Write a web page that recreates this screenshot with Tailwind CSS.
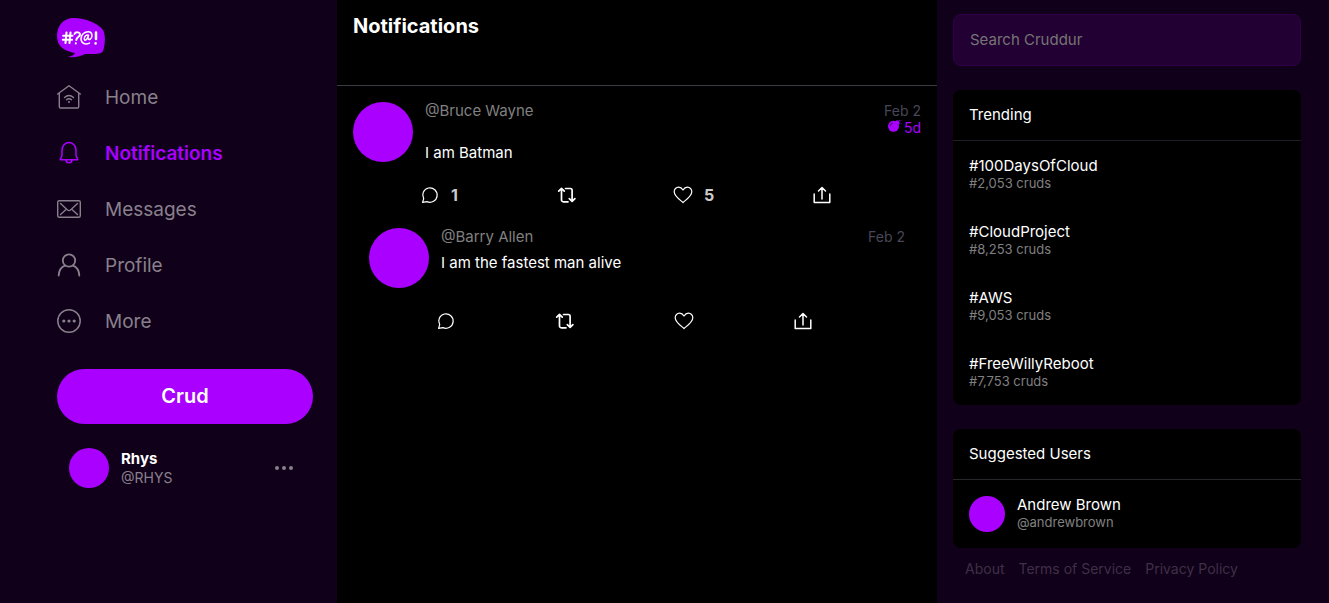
<!DOCTYPE html>
<html lang="en">
<head>
<meta charset="utf-8">
<meta name="viewport" content="width=device-width, initial-scale=1">
<title>Cruddur</title>
<script src="https://cdn.jsdelivr.net/npm/@tailwindcss/browser@4"></script>
</head>
<body class="bg-[#100019] text-white font-['Inter',sans-serif] text-[15px]">
<svg class="hidden" aria-hidden="true">
  <symbol id="reply" viewBox="0 0 18 18"><path d="M2.7 12.6A7.2 7.2 0 1 1 6 15.6L1.6 16.4Z" fill="none" stroke="currentColor" stroke-width="1.2" stroke-linejoin="round"/></symbol>
  <symbol id="repost" viewBox="0 0 20 18"><path d="M1.7 5.2 4.5 2.4 7.3 5.2M4.5 2.8V14a1.8 1.8 0 0 0 1.8 1.8H11M8.5 2.5h4.800a1.8 1.8 0 0 1 1.8 1.8V15M12.3 12.6l2.8 2.8 2.8-2.8" fill="none" stroke="currentColor" stroke-width="1.7" stroke-linecap="round" stroke-linejoin="round"/></symbol>
  <symbol id="heart" viewBox="0 0 20 18"><path d="M10 16.5C8 14.5 1.2 10.2 1.2 5.7A4.4 4.4 0 0 1 5.6 1.2C7.7 1.2 9 2.4 10 4 11 2.4 12.3 1.2 14.4 1.2a4.4 4.4 0 0 1 4.4 4.5C18.8 10.2 12 14.5 10 16.5Z" fill="none" stroke="currentColor" stroke-width="1.2" stroke-linejoin="round"/></symbol>
  <symbol id="share" viewBox="0 0 18 18"><path d="M1.2 8v8.5h15.6V8M9 13V1.5M5.5 5 9 1.5 12.500 5" fill="none" stroke="currentColor" stroke-width="1.5" stroke-linecap="round" stroke-linejoin="round"/></symbol>
</svg>
<div class="flex min-h-screen justify-center">
  <nav class="flex w-[337px] shrink-0 flex-col pl-[57px] pr-6" aria-label="Main">
    <svg class="mt-[18px] h-10 w-12" viewBox="0 0 48 40" role="img" aria-label="Cruddur">
      <path d="M17 0C28 0 41 5 46 12c3 5 2 16 0 21-2 4-12 3-18 3-4 2-10 4-17 3 4-1 6-2 7-4C8 33 0 29 0 18 0 8 6 0 17 0Z" fill="#a0f"/>
      <g fill="none" stroke="#fff" stroke-width="1.8" stroke-linecap="round" stroke-linejoin="round"><path d="M9.500 14.500 8.500 25M13.500 14.500l-1 10.500M6.200 17.800h9.300M5.800 21.800h9.300" stroke-width="2.100"/><path d="M17.500 16c1-2.500 5.500-2 5.500.500 0 2.500-3.700 2.500-3.700 5.500M18.800 25.300v.3" stroke-width="2"/><path d="M31.500 17.300c-2-1-4.200 1-4.200 3.500 0 2.500 3 1.500 4.200-3.500-1 4 0 5 2 3.700 2.500-2 2-7.200-2.200-7.200-4 0-7.300 3-7.300 7 0 5 4.500 6 8.500 4.300" stroke-width="1.500"/><path d="M39 14.500v6.500M38.600 25.300v.2" stroke-width="2.500"/></g>
    </svg>
    <div class="mt-3 flex flex-col text-[19px] text-[#88808c]">
      <a href="#" class="flex h-14 items-center gap-6"><svg class="mb-0.5 size-6" viewBox="0 0 24 24" fill="none" stroke="currentColor" stroke-width="1.4" stroke-linecap="round" stroke-linejoin="round"><path d="M.7 9 12 .8 23.300 9M2.300 8v13.700q0 1.300 1.300 1.300h16.800q1.300 0 1.300-1.300V8"/><path d="M7.500 12.500q4.500-4 9 0M9.500 14.700q2.500-2 5 0"/><circle cx="12" cy="17" r="1" fill="currentColor" stroke="none"/></svg>Home</a>
      <a href="#" class="flex h-14 items-center gap-6 font-semibold text-[#a0f]" aria-current="page"><svg class="mb-0.5 size-6" viewBox="0 0 24 24" fill="none" stroke="currentColor" stroke-width="1.5" stroke-linecap="round" stroke-linejoin="round"><path d="M3.300 18.700c-.6-1.500 1.700-1.700 1.700-4.700V9a7 7.500 0 0 1 14 0v5c0 3 2.300 3.200 1.700 4.700ZM9 18.900c0 3.700 6 3.700 6 0"/></svg>Notifications</a>
      <a href="#" class="flex h-14 items-center gap-6"><svg class="mb-0.5 size-6" viewBox="0 0 24 24" fill="none" stroke="currentColor" stroke-width="1.4" stroke-linecap="round" stroke-linejoin="round"><rect x=".7" y="3.700" width="22.600" height="16.600" rx="1.500"/><path d="M3.500 6.500 10.500 13q1.500 1.200 3 0l7-6.500M3.500 17.500l5-4.500M20.500 17.500l-5-4.500"/></svg>Messages</a>
      <a href="#" class="flex h-14 items-center gap-6"><svg class="mb-0.5 size-6" viewBox="0 0 24 24" fill="none" stroke="currentColor" stroke-width="1.800" stroke-linecap="round"><circle cx="12" cy="7.500" r="6.200"/><path d="M1.700 22.500C2 17 4.500 14 8 12.700M22.300 22.500C22 17 19.500 14 16 12.700"/></svg>Profile</a>
      <a href="#" class="flex h-14 items-center gap-6"><svg class="mb-0.5 size-6" viewBox="0 0 24 24" fill="currentColor"><circle cx="12" cy="12" r="11.200" fill="none" stroke="currentColor" stroke-width="1.500"/><circle cx="6.800" cy="12" r="1.600"/><circle cx="12" cy="12" r="1.600"/><circle cx="17.200" cy="12" r="1.600"/></svg>More</a>
    </div>
    <button class="mt-[19px] h-[55px] rounded-full bg-[#a0f] pb-0.5 text-xl font-semibold">Crud</button>
    <button class="mt-3 flex items-center gap-3 p-3 text-left">
      <span class="size-10 rounded-full bg-[#a0f]"></span>
      <span class="flex-1 leading-[19px]"><span class="block font-bold">Rhys</span><span class="block text-sm leading-[19px] text-[#88808c]">@RHYS</span></span>
      <svg class="mr-2 h-4 w-[18px] text-[#88808c]" viewBox="0 0 18 16" fill="currentColor" role="img" aria-label="Account menu"><circle cx="2" cy="8" r="2"/><circle cx="9" cy="8" r="2"/><circle cx="16" cy="8" r="2"/></svg>
    </button>
  </nav>

  <main class="w-[600px] shrink-0 bg-black">
    <header class="h-[86px] border-b border-[#3a3b44] px-4 py-3"><h1 class="text-xl font-bold">Notifications</h1></header>
    <article class="p-4 pb-0">
      <div class="flex gap-3">
        <div class="size-[60px] rounded-full bg-[#a0f]"></div>
        <div class="flex-1 leading-[18px]">
          <div class="text-[#808080]">@Bruce Wayne</div>
          <p class="mt-6">I am Batman</p>
        </div>
        <div class="text-right text-sm leading-[17px] text-[#474759]">
          <time class="block">Feb 2</time>
          <div class="flex items-center justify-end gap-0.5 text-[#a0f]"><svg class="mb-1 h-3 w-[14px]" viewBox="0 0 14 12" role="img" aria-label="Expires in"><circle cx="5.500" cy="6.300" r="5.500" fill="currentColor"/><path d="m7 2 2-2 3 3-2 2Z" fill="currentColor"/><path d="M10 1.500q1-1.200 2.500-.7M13.300 3l.5.500M13.500.5v.2" fill="none" stroke="currentColor"/><path d="M2 6q.5-2.500 3-3" fill="none" stroke="#000" stroke-width=".6"/></svg>5d</div>
        </div>
      </div>
      <div class="ml-[68px] mt-6 flex h-[18px] items-center text-base font-bold text-[#ccc]">
        <button class="flex w-[136px] items-center gap-3" aria-label="Reply, 1"><svg class="h-[18px] w-[18px] text-white"><use href="#reply"/></svg>1</button>
        <button class="flex w-[116px] items-center" aria-label="Repost"><svg class="h-[18px] w-5 text-white"><use href="#repost"/></svg></button>
        <button class="flex w-[140px] items-center gap-[11px]" aria-label="Like, 5"><svg class="h-[18px] w-5 text-white"><use href="#heart"/></svg>5</button>
        <button aria-label="Share"><svg class="h-[18px] w-[18px] text-white"><use href="#share"/></svg></button>
      </div>
    </article>
    <article class="px-8 pt-6">
      <div class="flex gap-3">
        <div class="size-[60px] rounded-full bg-[#a0f]"></div>
        <div class="flex-1 leading-[18px]">
          <div class="text-[#808080]">@Barry Allen</div>
          <p class="mt-2">I am the fastest man alive</p>
        </div>
        <time class="text-sm leading-[17px] text-[#474759]">Feb 2</time>
      </div>
      <div class="ml-[68px] mt-6 flex h-[18px] items-center">
        <button class="w-[118px]" aria-label="Reply"><svg class="h-[18px] w-[18px]"><use href="#reply"/></svg></button>
        <button class="w-[119px]" aria-label="Repost"><svg class="h-[18px] w-5"><use href="#repost"/></svg></button>
        <button class="w-[120px]" aria-label="Like"><svg class="h-[18px] w-5"><use href="#heart"/></svg></button>
        <button aria-label="Share"><svg class="h-[18px] w-[18px]"><use href="#share"/></svg></button>
      </div>
    </article>
  </main>

  <aside class="w-[392px] pl-4 pr-7 pt-[14px]">
    <input type="search" aria-label="Search Cruddur" placeholder="Search Cruddur" class="block h-[52px] w-full rounded-lg border border-[#31004a] bg-[#230033] px-4 pb-0.5 placeholder:text-[#757575]">
    <section class="mt-6 rounded-lg bg-black">
      <h2 class="h-[51px] border-b border-[#1f1f29] px-4 leading-[50px]">Trending</h2>
      <a href="#" class="block h-[66px] px-4 pt-4"><span class="block leading-[18px]">#100DaysOfCloud</span><span class="block text-[13px] leading-4 text-[#808080]">#2,053 cruds</span></a>
      <a href="#" class="block h-[66px] px-4 pt-4"><span class="block leading-[18px]">#CloudProject</span><span class="block text-[13px] leading-4 text-[#808080]">#8,253 cruds</span></a>
      <a href="#" class="block h-[66px] px-4 pt-4"><span class="block leading-[18px]">#AWS</span><span class="block text-[13px] leading-4 text-[#808080]">#9,053 cruds</span></a>
      <a href="#" class="block h-[66px] px-4 pt-4"><span class="block leading-[18px]">#FreeWillyReboot</span><span class="block text-[13px] leading-4 text-[#808080]">#7,753 cruds</span></a>
    </section>
    <section class="mt-6 rounded-lg bg-black">
      <h2 class="h-[51px] border-b border-[#26262b] px-4 leading-[50px]">Suggested Users</h2>
      <a href="#" class="flex gap-3 p-4"><span class="size-9 rounded-full bg-[#a0f]"></span><span><span class="block leading-[18px]">Andrew Brown</span><span class="block text-[13px] leading-4 text-[#808080]">@andrewbrown</span></span></a>
    </section>
    <footer class="flex gap-[14px] px-3 py-3 text-sm leading-[17px] text-[#402f47]"><a href="#">About</a><a href="#">Terms of Service</a><a href="#">Privacy Policy</a></footer>
  </aside>
</div>
</body>
</html>
